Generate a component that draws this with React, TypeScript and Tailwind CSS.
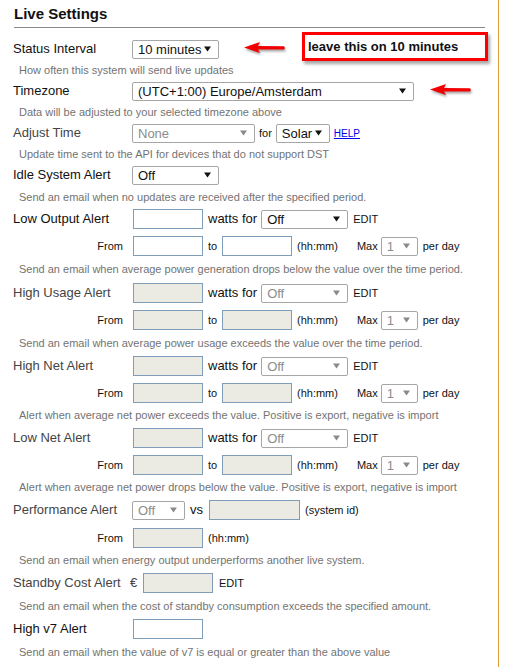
import React from 'react'

const Caret = ({ dim }: { dim?: boolean }) => (
  <svg width="7" height="6" viewBox="0 0 7 6" className="shrink-0">
    <polygon points="0,0.5 7,0.5 3.5,5.5" fill={dim ? '#8a8a8a' : '#111'} />
  </svg>
)

const Select = ({ text, w, dim }: { text: string; w: string; dim?: boolean }) => (
  <div
    className={`${w} h-[19px] shrink-0 flex items-center justify-between pl-[5px] pr-[7px] bg-white border border-[#a6a6a6] rounded-[2px] text-[13px] leading-none ${
      dim ? 'text-[#8c8c8c]' : 'text-[#111]'
    }`}
  >
    <span>{text}</span>
    <Caret dim={dim} />
  </div>
)

const Input = ({ w = 'w-[70px]', dim }: { w?: string; dim?: boolean }) => (
  <div className={`${w} h-[20px] shrink-0 border border-[#7f9db9] ${dim ? 'bg-[#ebebe4]' : 'bg-white'}`} />
)

const Label = ({ children, dim }: { children: React.ReactNode; dim?: boolean }) => (
  <div className={`w-[119px] shrink-0 text-[13px] ${dim ? 'text-[#444]' : 'text-[#111]'}`}>{children}</div>
)

const Help = ({ children, h }: { children: React.ReactNode; h: string }) => (
  <div className={`${h} flex items-center pl-[6px] text-[11px] text-[#737373]`}>{children}</div>
)

// alert with "watts for" select and a from/to row below
const WattsAlert = ({ label, dim, help, helpH }: { label: string; dim?: boolean; help: string; helpH: string }) => (
  <>
    <div className="h-[20px] flex items-center">
      <Label dim={dim}>{label}</Label>
      <div className="ml-[1px]">
        <Input dim={dim} />
      </div>
      <span className="ml-[5px] text-[13px] text-[#111]">watts for</span>
      <div className="ml-[4px]">
        <Select text="Off" w="w-[87px]" dim={dim} />
      </div>
      <span className="ml-[5px] text-[11px] text-[#111]">EDIT</span>
    </div>
    <FromRow dim={dim} />
    <Help h={helpH}>{help}</Help>
  </>
)

const FromRow = ({ dim }: { dim?: boolean }) => (
  <div className="mt-[7px] h-[20px] flex items-center text-[11px] text-[#111]">
    <div className="w-[110px] text-right">From</div>
    <div className="ml-[10px]">
      <Input dim={dim} />
    </div>
    <span className="ml-[5px] w-[9px]">to</span>
    <div className="ml-[5px]">
      <Input dim={dim} />
    </div>
    <span className="ml-[5px]">(hh:mm)</span>
    <span className="ml-[19px]">Max</span>
    <div className="ml-[3px]">
      <Select text="1" w="w-[37px]" dim />
    </div>
    <span className="ml-[5px]">per day</span>
  </div>
)

const RedArrow = ({ className }: { className: string }) => (
  <svg
    width="44"
    height="14"
    viewBox="0 0 44 14"
    className={`absolute drop-shadow-[1px_2px_1px_rgba(0,0,0,0.35)] ${className}`}
  >
    <path d="M1 6.5 L17 1 L15 5 L41 5.2 L42 7 L41 8.5 L15 8.5 L17 12 Z" fill="#f20000" />
  </svg>
)

export default function App() {
  return (
    <div className="relative w-[506px] h-[667px] overflow-hidden bg-white font-['Liberation_Sans',Arial,sans-serif]">
      <div className="w-[499px] h-full border-r border-[#e39a3b] pl-[13px]">
        <div className="ml-[1px] w-[471px] h-[28px] border-b border-[#8a8a8a] pt-[5px] text-[15px] leading-[17px] font-bold text-[#111]">
          Live Settings
        </div>

        <div className="mt-[11px] h-[20px] flex items-center">
          <Label>Status Interval</Label>
          <Select text="10 minutes" w="w-[87px]" />
        </div>
        <Help h="h-[22px]">How often this system will send live updates</Help>

        <div className="h-[20px] flex items-center">
          <Label>Timezone</Label>
          <Select text="(UTC+1:00) Europe/Amsterdam" w="w-[282px]" />
        </div>
        <Help h="h-[22px]">Data will be adjusted to your selected timezone above</Help>

        <div className="h-[20px] flex items-center">
          <Label dim>Adjust Time</Label>
          <Select text="None" w="w-[123px]" dim />
          <span className="ml-[4px] text-[11px] text-[#111]">for</span>
          <div className="ml-[4px]">
            <Select text="Solar" w="w-[54px]" />
          </div>
          <a className="ml-[4px] text-[10px] text-[#0000ee] underline">HELP</a>
        </div>
        <Help h="h-[22px]">Update time sent to the API for devices that do not support DST</Help>

        <div className="h-[20px] flex items-center">
          <Label>Idle System Alert</Label>
          <Select text="Off" w="w-[87px]" />
        </div>
        <Help h="h-[24px]">Send an email when no updates are received after the specified period.</Help>

        <WattsAlert
          label="Low Output Alert"
          help="Send an email when average power generation drops below the value over the time period."
          helpH="h-[27px]"
        />
        <WattsAlert
          label="High Usage Alert"
          dim
          help="Send an email when average power usage exceeds the value over the time period."
          helpH="h-[26px]"
        />
        <WattsAlert
          label="High Net Alert"
          dim
          help="Alert when average net power exceeds the value. Positive is export, negative is import"
          helpH="h-[25px]"
        />
        <WattsAlert
          label="Low Net Alert"
          dim
          help="Alert when average net power drops below the value. Positive is export, negative is import"
          helpH="h-[25px]"
        />

        <div className="h-[20px] flex items-center">
          <Label dim>Performance Alert</Label>
          <Select text="Off" w="w-[53px]" dim />
          <span className="ml-[5px] text-[13px] text-[#111]">vs</span>
          <div className="ml-[6px]">
            <Input w="w-[91px]" dim />
          </div>
          <span className="ml-[5px] text-[11px] text-[#111]">(system id)</span>
        </div>
        <div className="mt-[8px] h-[20px] flex items-center text-[11px] text-[#111]">
          <div className="w-[110px] text-right">From</div>
          <div className="ml-[10px]">
            <Input dim />
          </div>
          <span className="ml-[5px]">(hh:mm)</span>
        </div>
        <Help h="h-[25px]">Send an email when energy output underperforms another live system.</Help>

        <div className="h-[20px] flex items-center">
          <div className="w-[117px] shrink-0 whitespace-nowrap text-[13px] text-[#444]">Standby Cost Alert</div>
          <span className="w-[13px] text-[13px] text-[#444]">€</span>
          <Input dim />
          <span className="ml-[6px] text-[11px] text-[#111]">EDIT</span>
        </div>
        <Help h="h-[26px]">Send an email when the cost of standby consumption exceeds the specified amount.</Help>

        <div className="h-[20px] flex items-center">
          <Label>High v7 Alert</Label>
          <div className="ml-[1px]">
            <Input />
          </div>
        </div>
        <Help h="h-[26px]">Send an email when the value of v7 is equal or greater than the above value</Help>
      </div>

      {/* annotations */}
      <RedArrow className="left-[243px] top-[41px]" />
      <RedArrow className="left-[429px] top-[83px]" />
      <div className="absolute left-[302px] top-[32px] w-[186px] h-[29px] border-[3px] border-[#f00] bg-white shadow-[2px_3px_3px_rgba(0,0,0,0.35)] flex items-center pl-[3px] text-[13px] font-bold text-[#111]">
        leave this on 10 minutes
      </div>
    </div>
  )
}
